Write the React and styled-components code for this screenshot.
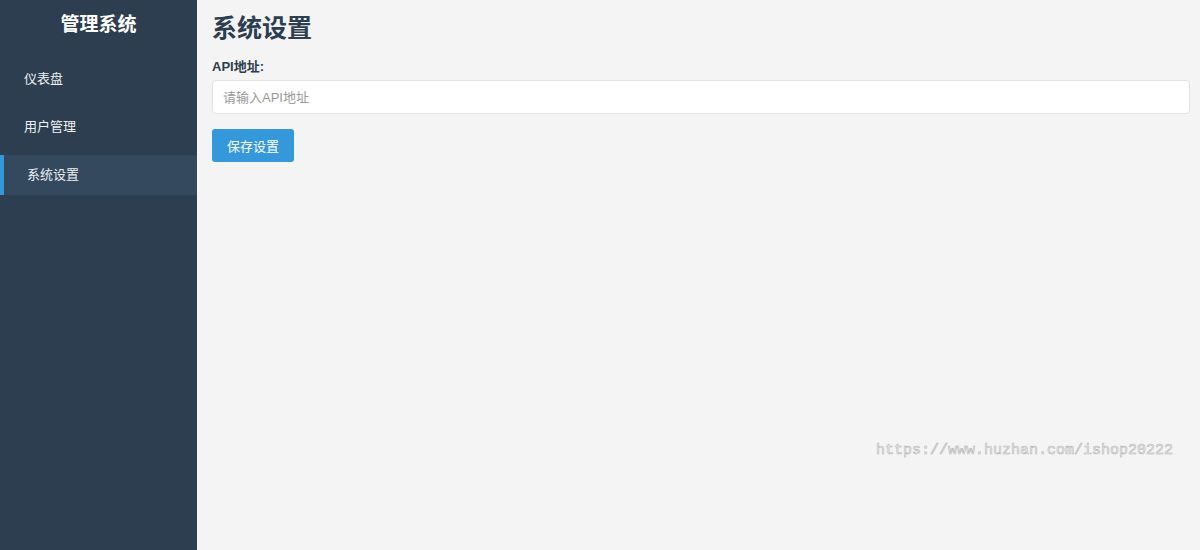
import React, { useState } from 'react'
import styled, { createGlobalStyle } from 'styled-components'

const GlobalStyle = createGlobalStyle`
  html, body, #root {
    margin: 0;
    padding: 0;
    height: 100%;
  }
  body {
    font-family: "Liberation Sans", "Noto Sans CJK SC", sans-serif;
    font-size: 13px;
    background: #f4f4f4;
  }
  * {
    box-sizing: border-box;
  }
`

const Layout = styled.div`
  display: flex;
  height: 550px;
`

const Sidebar = styled.div`
  width: 197px;
  flex-shrink: 0;
  background-color: #2c3e50;
  color: #fff;
`

const Brand = styled.h2`
  margin: 0;
  padding: 12px 0 0;
  height: 59px;
  text-align: center;
  font-size: 19px;
  font-weight: bold;
  line-height: 26px;
`

const Menu = styled.ul`
  list-style: none;
  margin: 0;
  padding: 0;
  display: flex;
  flex-direction: column;
  gap: 8px;
`

const MenuItem = styled.li`
  height: 40px;
  line-height: 40px;
  font-size: 13px;
  color: #ecf0f1;
  cursor: pointer;
  padding-left: ${(p) => (p.$active ? '23px' : '24px')};
  background-color: ${(p) => (p.$active ? '#34495e' : 'transparent')};
  border-left: ${(p) => (p.$active ? '4px solid #3498db' : 'none')};
`

const Main = styled.div`
  position: relative;
  flex: 1;
  padding: 12px 10px 15px 15px;
  background-color: #f4f4f4;
`

const Title = styled.h1`
  margin: 0 0 14px;
  font-size: 25px;
  line-height: 32px;
  font-weight: bold;
  color: #2c3e50;
`

const Field = styled.div`
  margin-bottom: 15px;
`

const Label = styled.label`
  display: block;
  font-size: 13px;
  font-weight: bold;
  color: #2c3e50;
  line-height: 18px;
  margin-bottom: 4px;
`

const Input = styled.input`
  display: block;
  width: 100%;
  height: 34px;
  padding: 0 10px;
  font-size: 13px;
  font-family: inherit;
  border: 1px solid #e2e2e2;
  border-radius: 4px;
  background: #fff;
  outline: none;

  &::placeholder {
    color: #999;
  }
`

const Button = styled.button`
  width: 82px;
  height: 33px;
  border: none;
  border-radius: 3px;
  background-color: #3498db;
  color: #fff;
  font-size: 13px;
  font-family: inherit;
  cursor: pointer;
`

const Watermark = styled.div`
  position: absolute;
  left: 679px;
  top: 442px;
  font-family: "Liberation Mono", monospace;
  font-size: 15px;
  color: #fafafa;
  -webkit-text-stroke: 0.6px #b4b4b4;
  pointer-events: none;
`

const menu = ['仪表盘', '用户管理', '系统设置']

export default function App() {
  const [active, setActive] = useState('系统设置')
  const [api, setApi] = useState('')

  return (
    <>
      <GlobalStyle />
      <Layout>
        <Sidebar>
          <Brand>管理系统</Brand>
          <Menu>
            {menu.map((m) => (
              <MenuItem key={m} $active={active === m} onClick={() => setActive(m)}>
                {m}
              </MenuItem>
            ))}
          </Menu>
        </Sidebar>
        <Main>
          <Title>系统设置</Title>
          <Field>
            <Label htmlFor="api">API地址:</Label>
            <Input
              id="api"
              placeholder="请输入API地址"
              value={api}
              onChange={(e) => setApi(e.target.value)}
            />
          </Field>
          <Button>保存设置</Button>
          <Watermark>https://www.huzhan.com/ishop20222</Watermark>
        </Main>
      </Layout>
    </>
  )
}
